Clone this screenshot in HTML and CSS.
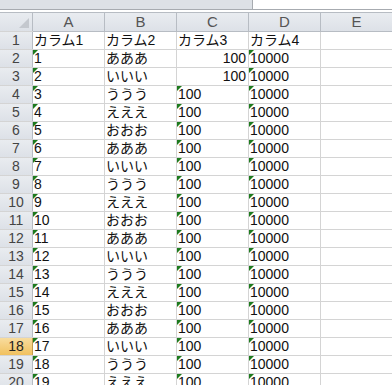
FILE: index.html
```html
<!DOCTYPE html>
<html lang="ja">
<head>
    <meta charset="UTF-8">
    <title>Sheet1</title>
    <link rel="stylesheet" href="styles.css">
</head>
<body>
    <div class="formula-bar">
        <div class="name-box"></div>
        <div class="formula-input"></div>
    </div>
    <div class="sheet"></div>

    <script>
// シートの中身を作る
var sheet = document.getElementsByClassName("sheet")[0];
var kana = ["あああ", "いいい", "ううう", "えええ", "おおお"];
var html = "<div class='corner'></div>";

// 列見出し
var cols = ["A", "B", "C", "D", "E"];
for(var i=0; i<cols.length; i++){
    html += "<div class='col-head'>" + cols[i] + "</div>";
}

for(var r=1; r<=20; r++){
    html += "<div class='row-head" + (r == 18 ? " active" : "") + "'>" + r + "</div>";
    if(r == 1){
        html += "<div class='cell'>カラム1</div>"
              + "<div class='cell'>カラム2</div>"
              + "<div class='cell'>カラム3</div>"
              + "<div class='cell'>カラム4</div>"
              + "<div class='cell'></div>";
        continue;
    }
    html += "<div class='cell txt'>" + (r - 1) + "</div>";
    html += "<div class='cell'>" + kana[(r - 2) % 5] + "</div>";
    // C2, C3 は数値なので右寄せ
    if(r < 4){
        html += "<div class='cell num'>100</div>";
    }else{
        html += "<div class='cell txt'>100</div>";
    }
    html += "<div class='cell txt'>10000</div>";
    html += "<div class='cell'></div>";
}
sheet.innerHTML = html;
    </script>
</body>
</html>
```
FILE: styles.css
```css
html, body{
    margin: 0;
    padding: 0;
    overflow: hidden;
    background: #fff;
}
body{
    font-family: "Liberation Sans", "Noto Sans CJK JP", sans-serif;
    font-size: 14px;
    color: #111;
}
.formula-bar{
    display: flex;
    height: 9px;
    border-bottom: 1px solid #a7abb0;
    margin-bottom: 2px;
}
.name-box{
    width: 252px;
    background-color: #dde1e6;
    border-right: 1px solid #a7abb0;
}
.formula-input{
    flex: 1;
    background-color: #fff;
}
.sheet{
    display: grid;
    grid-template-columns: 32px repeat(5, 71px);
    grid-template-rows: 18px;
    grid-auto-rows: 17px;
    column-gap: 1px;
    row-gap: 1px;
    background-color: #d4d4d4;
    border-top: 1px solid #b7bcc3;
}
.corner,
.col-head,
.row-head{
    background: linear-gradient(#e9ecf0, #dde1e7);
    color: #444;
    text-align: center;
    line-height: 18px;
}
.corner{
    position: relative;
    border-right: 1px solid #b7bcc3;
    margin-right: -1px;
}
.corner::after{
    content: "";
    position: absolute;
    right: 3px;
    bottom: 3px;
    border-left: 10px solid transparent;
    border-bottom: 10px solid #c4c8ce;
}
.col-head{
    border-bottom: 1px solid #b7bcc3;
    margin-bottom: -1px;
    box-shadow: 1px 0 0 #b7bcc3;
    font-size: 15px;
    color: #555;
}
.row-head{
    line-height: 17px;
    border-right: 1px solid #b7bcc3;
    margin-right: -1px;
    font-size: 14px;
}
.row-head.active{
    background: linear-gradient(#f8dc9e, #f1c15f);
    border-right-color: #c29b4d;
    color: #222;
}
.cell{
    position: relative;
    background-color: #fff;
    line-height: 17px;
    padding-left: 1px;
    white-space: nowrap;
}
.cell.num{
    text-align: right;
    padding-right: 2px;
    padding-left: 0;
}
.cell.txt::before{
    content: "";
    position: absolute;
    left: 0;
    top: 0;
    border-top: 5px solid #1d7a1d;
    border-right: 5px solid transparent;
}
```
